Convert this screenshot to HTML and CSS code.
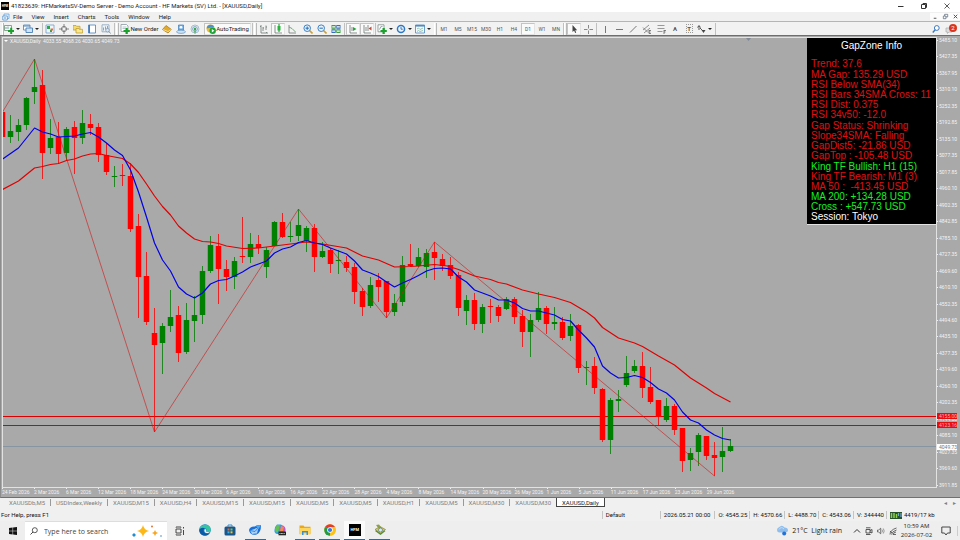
FILE: index.html
```html
<!DOCTYPE html>
<html lang="en">
<head>
<meta charset="utf-8">
<title>XAUUSD,Daily</title>
<link rel="stylesheet" href="styles.css">
</head>
<body>
<header class="titlebar">
  <span class="app-logo">HFM</span>
  <span class="title">41823639: HFMarketsSV-Demo Server - Demo Account - HF Markets (SV) Ltd. - [XAUUSD,Daily]</span>
  <div class="win-controls">
    <button aria-label="Minimize"><svg viewBox="0 0 8 8"><path d="M1 4.500h5.500" stroke="#333"/></svg></button>
    <button aria-label="Restore"><svg viewBox="0 0 8 8"><path d="M1.500 2.500h4v4h-4zM3 2.500v-1h3.500v4h-1" stroke="#333" fill="none"/></svg></button>
    <button aria-label="Close"><svg viewBox="0 0 8 8"><path d="M1.500 1.500l5 5m0-5l-5 5" stroke="#333" stroke-width=".8"/></svg></button>
  </div>
</header>

<nav class="menubar">
  <svg class="menu-icon" viewBox="0 0 8 8"><path d="M2 1h5v4.500H2z" fill="#e8f2fc" stroke="#6aa5dc" stroke-width=".8"/><path d="M.8 3h4.500v4H.8z" fill="#fff" stroke="#4c90d2" stroke-width=".8"/><path d="M2 5h2" stroke="#4c90d2"/></svg>
  <button>File</button><button>View</button><button>Insert</button><button>Charts</button><button>Tools</button><button>Window</button><button>Help</button>
  <div class="mdi-controls">
    <button aria-label="Minimize chart"><svg viewBox="0 0 8 8"><path d="M2 6h3" stroke="#444"/></svg></button>
    <button aria-label="Restore chart"><svg viewBox="0 0 8 8"><path d="M1.500 3.500h3v3h-3zM3 3.500v-2h3.500v3h-2" stroke="#567" fill="none" stroke-width=".8"/></svg></button>
    <button aria-label="Close chart"><svg viewBox="0 0 8 8"><path d="M2 2l4 4m0-4l-4 4" stroke="#444"/></svg></button>
  </div>
</nav>

<div class="toolbar">
  <i class="grip first"></i>
  <button class="tool drop" aria-label="New chart"><svg viewBox="0 0 10 10"><path d="M.5 1.500h7v5h-7z" fill="#f4faf4" stroke="#6a8f74" stroke-width=".8"/><path d="M2 5V3m2 2V2.500" stroke="#579" stroke-width=".7"/><path d="M4 6h2.200V3.800h2V6H10v2H8.200v2h-2V8H4z" fill="#19a12b"/></svg></button>
  <button class="tool drop" aria-label="Profiles"><svg viewBox="0 0 10 10"><path d="M.5 1h6.500v5H.5z" fill="#fff" stroke="#5b8fc2" stroke-width=".9"/><path d="M3 4h6.500v4.500H3z" fill="#cfe3f5" stroke="#4a80b5" stroke-width=".9"/><path d="M.5 2h6.500" stroke="#4a80b5"/></svg></button>
  <i class="edge"></i>
  <button class="tool" aria-label="Market Watch"><svg viewBox="0 0 10 10"><path d="M1 1h8v8H1z" fill="#eef6fd" stroke="#6e9cc5" stroke-width=".8"/><path d="M2 2h3v3H2zM5 6h2v2H5z" fill="#2ba84a"/><path d="M5.500 4.500h2.500v2H5.500z" fill="#e36b3a"/></svg></button>
  <button class="tool" aria-label="Data Window"><svg viewBox="0 0 10 10"><circle cx="5" cy="5" r="2.600" fill="none" stroke="#777" stroke-width=".9"/><path d="M5 0v4M5 6v4M0 5h4M6 5h4" stroke="#777" stroke-width=".9"/></svg></button>
  <button class="tool" aria-label="Navigator"><svg viewBox="0 0 10 10"><path d="M0 1.500h3l.6.8H7V6H0z" fill="#f5dc6a" stroke="#b8962d" stroke-width=".7"/><path d="M3 4.500h2.800l.6.800h3.200V9H3z" fill="#fbe88a" stroke="#b8962d" stroke-width=".7"/></svg></button>
  <button class="tool" aria-label="Terminal"><svg viewBox="0 0 10 10"><path d="M1.500 1h7v8h-7z" fill="#fff" stroke="#5b8cc4" stroke-width=".9"/><path d="M2.300 1v8" stroke="#3f77b5" stroke-width="1.300"/></svg></button>
  <button class="tool" aria-label="Strategy Tester"><svg viewBox="0 0 10 10"><path d="M1 .8h7v7H1z" fill="#eef3f8" stroke="#89a2ba" stroke-width=".8"/><path d="M2.500 6.500v-3m2 2V2.500m2 3.500V2" stroke="#8aa"/><circle cx="6.500" cy="6.200" r="1.800" fill="#dce8f2" stroke="#7894ad" stroke-width=".7"/><path d="M8 7.500l1.500 2" stroke="#7894ad"/></svg></button>
  <i class="sep"></i><i class="grip"></i>
  <button class="tool text new-order"><svg viewBox="0 0 10 10"><path d="M1 .5h5.500L8 2v5.500H1z" fill="#fff" stroke="#8a98a5" stroke-width=".8"/><path d="M2.500 3h4M2.500 4.500h3" stroke="#9ab" stroke-width=".7"/><path d="M3.500 6h2V4h2.300v2h2v2h-2v2H5.500V8h-2z" fill="#19a12b"/></svg>New Order</button>
  <button class="tool" aria-label="MetaEditor"><svg viewBox="0 0 10 10"><path d="M.5 5.500L4 1.500l5.500 4L6 9z" fill="#e2aa2d" stroke="#a87414" stroke-width=".7"/><path d="M1 5.500l5 2 3.500-2" fill="none" stroke="#fff0a8" stroke-width=".7"/></svg></button>
  <button class="tool" aria-label="Community"><svg viewBox="0 0 10 10"><path d="M2.500 1h5v5h-5z" fill="#7cb4e6" stroke="#3c7dba" stroke-width=".7"/><circle cx="5" cy="3.300" r="1.300" fill="#fff"/><ellipse cx="5" cy="7.800" rx="4.500" ry="1.600" fill="#cfe2f3" stroke="#5e93c4" stroke-width=".7"/></svg></button>
  <button class="tool" aria-label="Signals"><svg viewBox="0 0 10 10"><circle cx="5" cy="5" r="4" fill="none" stroke="#9db9cc" stroke-width=".9"/><circle cx="5" cy="5" r="2.400" fill="none" stroke="#6ea0c4" stroke-width=".9"/><circle cx="5" cy="5" r="1.200" fill="#36a44b"/><path d="M5 5v4.500" stroke="#36a44b"/></svg></button>
  <button class="tool text pressed auto"><svg viewBox="0 0 10 10"><circle cx="4.500" cy="4.500" r="4" fill="#e9bd3c"/><path d="M.7 4.500a4 4 0 0 1 7.600-1.500z" fill="#4d92cf"/><circle cx="6.700" cy="6.700" r="3.200" fill="#1da237"/><path d="M5.800 5l2.600 1.700-2.600 1.700z" fill="#fff"/></svg>AutoTrading</button>
  <i class="sep"></i><i class="grip"></i>
  <button class="tool" aria-label="Bar chart"><svg viewBox="0 0 10 10"><path d="M2 1v8h7M1 2.500h1M4 7V3m0 1h1M7 6V1.500m0 1.500h1M8 9l-1-1" stroke="#6d7a74" stroke-width=".8" fill="none"/></svg></button>
  <button class="tool pressed" aria-label="Candlesticks"><svg viewBox="0 0 10 10"><path d="M2 1v8h7" stroke="#6d7a74" stroke-width=".8" fill="none"/><path d="M6 0v8" stroke="#158a25"/><path d="M4.500 2h3v4.500h-3z" fill="#28b53c"/></svg></button>
  <button class="tool" aria-label="Line chart"><svg viewBox="0 0 10 10"><path d="M2 1v8h7" stroke="#6d7a74" stroke-width=".8" fill="none"/><path d="M2 3l3 1.500L8.500 8" stroke="#4d9a5d" stroke-width=".8" fill="none"/></svg></button>
  <i class="gap"></i>
  <button class="tool" aria-label="Zoom in"><svg viewBox="0 0 10 10"><path d="M6.500 6.500L9.500 9.500" stroke="#c9a03a" stroke-width="1.600"/><circle cx="4.200" cy="4.200" r="3.300" fill="#e3f1fc" stroke="#3e82c4"/><path d="M2.500 4.200h3.400M4.200 2.500v3.400" stroke="#2b6cb0"/></svg></button>
  <button class="tool" aria-label="Zoom out"><svg viewBox="0 0 10 10"><path d="M6.500 6.500L9.500 9.500" stroke="#c9a03a" stroke-width="1.600"/><circle cx="4.200" cy="4.200" r="3.300" fill="#e3f1fc" stroke="#3e82c4"/><path d="M2.500 4.200h3.400" stroke="#2b6cb0"/></svg></button>
  <button class="tool" aria-label="Tile windows"><svg viewBox="0 0 10 10"><path d="M.5 1h4.200v3.700H.5zM5.300 5.300h4.200V9H5.300z" fill="#3f9b46"/><path d="M5.300 1h4.200v3.700H5.300zM.5 5.300h4.200V9H.5z" fill="#3570b8"/><path d="M1.200 2.800h2.800M6 2.800h2.800M1.200 7.200h2.800M6 7.200h2.800" stroke="#fff" stroke-width="1.200"/></svg></button>
  <i class="sep"></i>
  <button class="tool pressed" aria-label="Auto scroll"><svg viewBox="0 0 10 10"><path d="M2 1v8h7" stroke="#6d7a74" stroke-width=".8" fill="none"/><path d="M4 7V3" stroke="#6d7a74" stroke-width=".8"/><path d="M5 3l3.500 2L5 7z" fill="#28a53c"/></svg></button>
  <button class="tool pressed" aria-label="Chart shift"><svg viewBox="0 0 10 10"><path d="M2 1v8h7M6 1v6M4 7V3" stroke="#6d7a74" stroke-width=".8" fill="none"/><path d="M9.500 2.500v4L6.500 4.500z" fill="#c34a3a"/></svg></button>
  <i class="sep"></i>
  <button class="tool drop" aria-label="Indicators"><svg viewBox="0 0 10 10"><path d="M1 .8h6v7H1z" fill="#fff" stroke="#7d8d88" stroke-width=".8"/><path d="M2.500 5.500q1-4 3-3" fill="none" stroke="#678" stroke-width=".7"/><path d="M3.500 6h2V4h2.300v2h2v2h-2v2H5.500V8h-2z" fill="#19a12b"/></svg></button>
  <button class="tool drop" aria-label="Periods"><svg viewBox="0 0 10 10"><circle cx="5" cy="5" r="4.300" fill="#2f79c4"/><circle cx="5" cy="5" r="2.800" fill="#e8f3fd"/><path d="M5 3v2.200h1.800" stroke="#245c96" fill="none" stroke-width=".8"/></svg></button>
  <button class="tool drop" aria-label="Templates"><svg viewBox="0 0 10 10"><path d="M.5 1h9v8h-9z" fill="#f4f9fd" stroke="#4b86bd" stroke-width=".8"/><path d="M.5 1.800h9" stroke="#4b86bd" stroke-width="1.500"/><path d="M2 5l1.500-1L5 5.500 8 4M2 7.500l1.500-1L5 7.500l3-1" stroke="#7b9" fill="none" stroke-width=".8"/></svg></button>
  <i class="grip"></i>
  <button class="tool tf">M1</button><button class="tool tf">M5</button><button class="tool tf">M15</button><button class="tool tf">M30</button><button class="tool tf">H1</button><button class="tool tf">H4</button><button class="tool tf pressed">D1</button><button class="tool tf">W1</button><button class="tool tf">MN</button>
  <i class="edge"></i><i class="grip"></i>
  <button class="tool pressed" aria-label="Cursor"><svg viewBox="0 0 10 10"><path d="M3.500 1v7l1.600-1.500L6.200 9l1-.5-1-2.300h2z" fill="#444"/></svg></button>
  <button class="tool" aria-label="Crosshair"><svg viewBox="0 0 10 10"><path d="M5.500 1v3.500M5.500 6.500V10M1 5.500h3.500M6.500 5.500H10" stroke="#888"/></svg></button>
  <i class="sep"></i>
  <button class="tool" aria-label="Vertical line"><svg viewBox="0 0 10 10"><path d="M5.500 2v7" stroke="#777"/></svg></button>
  <button class="tool" aria-label="Horizontal line"><svg viewBox="0 0 10 10"><path d="M2 5.500h7" stroke="#777"/></svg></button>
  <button class="tool" aria-label="Trendline"><svg viewBox="0 0 10 10"><path d="M2 8.500L8.500 2" stroke="#777"/></svg></button>
  <button class="tool" aria-label="Equidistant channel"><svg viewBox="0 0 10 10"><path d="M1 6l6-5M2 9l6-5M1 3.500l5 5" stroke="#666" stroke-width=".7"/><path d="M7 6v3.500M7 6.500h2M7 8h1.500M7 9.500h2" stroke="#555" stroke-width=".7"/></svg></button>
  <button class="tool" aria-label="Fibonacci"><svg viewBox="0 0 10 10"><path d="M1.500 1.500h7M1.500 4.500h7M1.500 7.500h5" stroke="#999"/><path d="M8 6v4M8 6.500h2M8 8h1.500" stroke="#555" stroke-width=".7"/></svg></button>
  <button class="tool letter" aria-label="Text">A</button>
  <button class="tool letter" aria-label="Text label"><span class="boxed">T</span></button>
  <button class="tool drop" aria-label="Arrows"><svg viewBox="0 0 10 10"><path d="M3 6V2M1.500 3.500L3 1.500l1.500 2M4 4l3 3" stroke="#444" fill="none" stroke-width=".9"/><path d="M5.500 6h4l-2 3z" fill="#444"/></svg></button>
  <i class="edge"></i>
  <div class="toolbar-end">
    <button class="tool" aria-label="Search"><svg viewBox="0 0 10 10"><circle cx="5.800" cy="4" r="2.400" fill="#fff" stroke="#3c78bd"/><path d="M4.200 5.800L1.800 8.500" stroke="#3c78bd" stroke-width="1.400"/></svg></button>
    <button class="tool bell" aria-label="Notifications"><svg viewBox="0 0 10 10"><path d="M1 4h6v4H4L2.500 9.500V8H1z" fill="#ddd" stroke="#aaa" stroke-width=".7"/></svg><span class="badge">2</span></button>
  </div>
</div>

<main class="chart">
  <section class="plot">
    <svg class="series" id="series" viewBox="3 38 933 449" preserveAspectRatio="none">
      <path d="M746 38h5l-2.500 3z" fill="#808a94"/>
      <path d="M3 446.500h933" stroke="#8794a2"/>
      <path class="level" d="M3 416.500h933"/>
      <path class="level" d="M3 425.500h933"/>
      <g id="candles"></g>
      <polyline class="zigzag" points="2.500,112 34.500,59 154.500,432 298.500,209 386.500,318 434.500,242 714.500,476"/>
      <polyline class="ma slow" points="2.500,189.500 18.500,181 34.500,168 42.500,166.500 50.500,164.500 58.500,163.500 66.500,160.500 74.500,159 82.500,156 90.500,154 98.500,153.500 106.500,155.500 114.500,157 122.500,158.500 130.500,164 138.500,172.500 146.500,184 154.500,196 162.500,206.500 170.500,215 178.500,226 186.500,233 194.500,239 202.500,241.500 210.500,242 218.500,243.500 226.500,246 242.500,248.500 258.500,248 274.500,246 290.500,244 306.500,242 322.500,244 346.500,248 362.500,256 378.500,260 394.500,267 410.500,266.500 418.500,266 434.500,264.500 447.500,266 458.500,269.500 474.500,276 490.500,279.500 498.500,282.500 506.500,284 522.500,290 538.500,294 554.500,297.500 570.500,302.500 586.500,312 594.500,318 602.500,327.500 618.500,338 634.500,343 642.500,346.500 658.500,356 674.500,365 690.500,378 706.500,388 714.500,393.500 730.500,402"/>
      <polyline class="ma fast" points="2.500,159 18.500,148 34.500,128 42.500,132 50.500,134 58.500,137 66.500,136.500 74.500,136 82.500,134 90.500,132.500 98.500,137 106.500,143 114.500,150 122.500,155.500 130.500,170 138.500,192 146.500,217 154.500,243 162.500,260 170.500,271 178.500,287 186.500,294 194.500,298 202.500,293 210.500,284 218.500,280.500 226.500,279.500 234.500,276 242.500,272 250.500,267 258.500,264 266.500,261 274.500,253 282.500,249 290.500,247 298.500,242.500 306.500,240.500 314.500,243 322.500,244.500 330.500,248 338.500,251 346.500,254 354.500,261 362.500,270 370.500,273 378.500,276.500 386.500,282 394.500,287 402.500,283 410.500,279.500 418.500,275.500 426.500,271 434.500,268.500 442.500,268 450.500,269 458.500,277 466.500,282 474.500,290 482.500,293 490.500,296 498.500,300 506.500,300 514.500,303 522.500,308.500 530.500,311 538.500,311 546.500,313 554.500,315 562.500,319.500 570.500,321 578.500,330 586.500,338 594.500,347 602.500,366 610.500,373 618.500,378 626.500,377.500 634.500,375.500 642.500,377.500 650.500,382.500 658.500,389 666.500,393 674.500,400 682.500,412 690.500,420 698.500,423 706.500,430 714.500,435 722.500,438.500 730.500,440"/>
    </svg>
    <p class="quote">XAUUSD,Daily&nbsp; 4033.55 4068.26 4030.65 4049.73</p>
    <aside class="info">
      <h2>GapZone Info</h2>
      <ul><li>Trend: 37.6</li></ul>
      <ul><li>MA Gap: 135.29 USD</li><li>RSI Below SMA(34)</li><li>RSI Bars 34SMA Cross: 11</li><li>RSI Dist: 0.375</li><li>RSI 34v50: -12.0</li></ul>
      <ul><li>Gap Status: Shrinking</li><li>Slope34SMA: Falling</li><li>GapDist5: -21.86 USD</li><li>GapTop : -105.48 USD</li></ul>
      <ul><li class="up">King TF Bullish: H1 (15)</li><li>King TF Bearish: M1 (3)</li><li>MA 50 :&nbsp; -413.45 USD</li><li class="up">MA 200: +134.28 USD</li><li class="up">Cross : +547.73 USD</li><li class="plain">Session: Tokyo</li></ul>
    </aside>
  </section>
  <div class="prices">
    <span>5485.10</span><span>5427.35</span><span>5367.95</span><span>5310.10</span><span>5252.35</span><span>5192.85</span><span>5135.10</span><span>5077.35</span><span>5017.85</span><span>4960.10</span><span>4902.35</span><span>4842.85</span><span>4785.10</span><span>4727.35</span><span>4669.60</span><span>4610.10</span><span>4552.35</span><span>4494.60</span><span>4435.10</span><span>4377.35</span><span>4319.60</span><span>4260.10</span><span>4202.35</span><span>4144.60</span><span>4085.10</span><span>4027.35</span><span>3969.60</span><span>3911.85</span>
    <b class="tag upper">4155.00</b><b class="tag lower">4123.16</b><b class="tag last">4049.73</b>
  </div>
  <div class="dates">
    <span>24 Feb 2026</span><span>2 Mar 2026</span><span>6 Mar 2026</span><span>12 Mar 2026</span><span>18 Mar 2026</span><span>24 Mar 2026</span><span>30 Mar 2026</span><span>6 Apr 2026</span><span>10 Apr 2026</span><span>16 Apr 2026</span><span>22 Apr 2026</span><span>28 Apr 2026</span><span>4 May 2026</span><span>8 May 2026</span><span>14 May 2026</span><span>20 May 2026</span><span>26 May 2026</span><span>1 Jun 2026</span><span>5 Jun 2026</span><span>11 Jun 2026</span><span>17 Jun 2026</span><span>23 Jun 2026</span><span>29 Jun 2026</span>
  </div>
</main>

<nav class="tabs">
  <button>XAUUSDb,M5</button><button>USDIndex,Weekly</button><button>XAUUSD,M15</button><button>XAUUSD,H4</button><button>XAUUSD,M15</button><button>XAUUSD,M15</button><button>XAUUSD,M5</button><button>XAUUSD,M5</button><button>XAUUSD,H1</button><button>XAUUSD,M5</button><button>XAUUSD,M30</button><button>XAUUSD,M30</button><button class="active">XAUUSD,Daily</button>
  <span class="tab-arrows"><span>◂</span><span>▸</span></span>
</nav>

<footer class="status">
  <span class="help">For Help, press F1</span>
  <span class="profile">Default</span>
  <span class="stamp">2026.05.21 00:00</span><span>O: 4545.25</span><span>H: 4570.66</span><span>L: 4488.70</span><span>C: 4543.06</span><span>V: 344440</span>
  <span class="traffic"><svg viewBox="0 0 12 7"><path d="M0 0h12v7H0z" fill="#27512a"/><path d="M1.500 1v5M4 1v5M6.500 2v4" stroke="#8fd04e" stroke-width="1.500"/><path d="M8.500 1v3M11 1v4" stroke="#6fa8dc" stroke-width="1.200"/></svg>4419/17 kb</span>
</footer>

<div class="taskbar">
  <button class="start" aria-label="Start"><svg viewBox="0 0 8 8"><path d="M0 1l3.600-.5v3.300H0zM4.100.4L8 0v3.800H4.100zM0 4.300h3.600v3.300L0 7zM4.100 4.300H8V8l-3.900-.4z" fill="#111"/></svg></button>
  <label class="search">
    <svg class="glass" viewBox="0 0 8 8"><circle cx="4.800" cy="3.200" r="2.500" fill="none" stroke="#333" stroke-width=".8"/><path d="M3 5L.5 7.500" stroke="#333" stroke-width=".9"/></svg>
    <input type="text" placeholder="Type here to search" aria-label="Type here to search">
    <svg class="sparkle" viewBox="0 0 32 14"><path d="M12 1q1 5 6 6-5 1-6 6-1-5-6-6 5-1 6-6z" fill="#fbb817"/><path d="M24 6q.5 2.500 3 3-2.500.5-3 3-.5-2.500-3-3 2.500-.5 3-3z" fill="#f6a623"/><path d="M3 9l2 2-2 2-2-2z" fill="#1e8fd5"/><circle cx="21" cy="2.500" r="1" fill="#d9763a"/><circle cx="30" cy="12" r="1" fill="#8fb8dd"/></svg>
  </label>
  <button class="view" aria-label="Task view"><svg viewBox="0 0 10 10"><path d="M1 3h5v4H1zM1 1.500V1h5v.5M1 8.500V9h5v-.5M8.500 1v1.500M8.500 4v5" fill="none" stroke="#333" stroke-width=".9"/></svg></button>
  <div class="apps">
    <button aria-label="Edge"><svg viewBox="0 0 12 12"><circle cx="6" cy="6" r="5.800" fill="#1779c8"/><path d="M.3 6A5.800 5.800 0 0 1 11.800 5.500c.2 2.500-3 3.300-4.500 2.200.8-1 .5-3-1.300-3.500C3.500 3.400 1 4.500.3 6z" fill="#35c6a0"/><path d="M.3 6c.7-2 3.700-3 5.400-1.800-2 .8-2 4.800 1.800 5.600 1.500.3 3-.3 3.500-.8-3 4-10.500 3.500-10.700-3z" fill="#0c59a4"/><path d="M5.700 5.200c.9-.5 2 .8 1.400 2.200 1 1 3 .9 4.200-.2-.8 2-4.700 2.800-5.800.3-.3-1-.2-1.800.2-2.300z" fill="#f0f0f0"/></svg></button>
    <button aria-label="Store"><svg viewBox="0 0 12 12"><path d="M4 2.500V1h4v1.500" fill="none" stroke="#2c8fd6"/><rect x=".5" y="2.500" width="11" height="9" rx="1.500" fill="#17558c"/><path d="M3.500 4.500h2v2h-2z" fill="#f2632f"/><path d="M6.500 4.500h2v2h-2z" fill="#8ac43f"/><path d="M3.500 7.300h2v2h-2z" fill="#2fb4f2"/><path d="M6.500 7.300h2v2h-2z" fill="#fdc12d"/></svg></button>
    <button class="open" aria-label="Mail"><svg viewBox="0 0 12 12"><path d="M0 6Q1 2 6 2.500q1-2 6-1.500 0 8-4.500 9.500Q1 12 0 6z" fill="#1b6ed6"/><path d="M1 6.500l8.500-3L8 9.500l-5 .5z" fill="#a9d2fb"/><path d="M1 6.500L6 7.500l3.500-4" stroke="#2f87e6" fill="none"/><path d="M7 2q3-1.500 5-1L9.500 5z" fill="#4aa8f5"/></svg></button>
    <button aria-label="Copilot"><svg viewBox="0 0 12 12"><path d="M3 .5h4Q9 1 9 4L5 10H3Q0 9 .5 6 1 2 3 .5z" fill="#2aa6dd"/><path d="M1 5l2-4h3L4 8H2z" fill="#67c14c"/><path d="M7 1.500h2q3 1.500 2.500 5-.5 3-3 4H5z" fill="#c256c4"/><path d="M7 2l3 1-1 4H6z" fill="#f08a4b"/><path d="M4.500 7.500H12v3.800H4.500z" fill="#222"/><path d="M5.500 9.500h5.500" stroke="#ddd" stroke-width=".9" stroke-dasharray="1 .4"/></svg></button>
    <button class="open" aria-label="File Explorer"><svg viewBox="0 0 12 12"><path d="M.5 1.500h4l1 1.200h6V10H.5z" fill="#e9a820"/><path d="M.5 4h11v6.500H.5z" fill="#fdd65b"/><path d="M3 11V7h6v4H7.500V8.500h-3V11z" fill="#3a8fd8"/></svg></button>
    <button class="open" aria-label="Chrome"><svg viewBox="0 0 12 12"><circle cx="6" cy="6" r="5.800" fill="#fbc116"/><path d="M6 6L1 3.100A5.800 5.800 0 0 1 11 3.100H6z" fill="#e33b2e"/><path d="M6 6v5.800A5.800 5.800 0 0 1 1 3.100z" fill="#229a48"/><path d="M6 6l2.500 1.500L6 11.800A5.800 5.800 0 0 0 11 3.100H6z" fill="#fbc116"/><circle cx="6" cy="6" r="2.800" fill="#fff"/><circle cx="6" cy="6" r="2.100" fill="#3578e5"/></svg></button>
    <button class="open current" aria-label="HF Markets"><span class="hfm">HFM</span></button>
    <button class="open" aria-label="MetaEditor"><svg viewBox="0 0 12 12"><path d="M1 7l5-3 5.500 3-5 4z" fill="#4b8f3c"/><path d="M1 5.500l5-3 5.500 3-5 4z" fill="#e8c34a" stroke="#6f7d35" stroke-width=".6"/><path d="M2 1l3-.5 3 4-2 2z" fill="#8aa04a"/><circle cx="6.500" cy="6" r="2" fill="#d4ebf7" stroke="#4a7fa0" stroke-width=".7"/></svg></button>
  </div>
  <div class="tray">
    <button class="weather"><svg viewBox="0 0 12 11"><path d="M3 7.500a2.700 2.700 0 0 1 0-5.200Q6-1 8.500 2.500q3.500 0 3.500 3-.3 2-2.500 2z" fill="#8fbdec"/><path d="M3 4.500Q5 1 8 4" stroke="#c7def6" fill="none"/><circle cx="8.200" cy="8.500" r="2" fill="#1f72d8"/></svg><span>21°C&nbsp; Light rain</span></button>
    <button aria-label="Show hidden icons"><svg class="t8" viewBox="0 0 8 8"><path d="M1 5.500l3-3 3 3" fill="none" stroke="#333"/></svg></button>
    <button aria-label="Meet now"><svg class="t8" viewBox="0 0 8 8"><path d="M1 2.500h4v3.500H1zM5 3.500l2-1v3.500l-2-1M1 .8h4.500M1 7.500h4.500" fill="none" stroke="#333" stroke-width=".8"/></svg></button>
    <button aria-label="Volume"><svg class="t8" viewBox="0 0 8 8"><path d="M.5 3h1.200l2-1.800v5.600l-2-1.800H.5z" fill="none" stroke="#444" stroke-width=".7"/><path d="M5 2.500q1 1.500 0 3M6.300 1.500q1.800 2.500 0 5" fill="none" stroke="#777" stroke-width=".7"/></svg></button>
    <button aria-label="Pen"><svg class="t8" viewBox="0 0 8 8"><path d="M1 7.500Q1 3 7.500 1M2.500 7.500Q3 4.500 7.500 3M4 7.500q.5-2 3-2.500M1 4l2 2M4 7.500h3" fill="none" stroke="#444" stroke-width=".8"/></svg></button>
    <div class="clock"><span>10:59 AM</span><span>2026-07-02</span></div>
    <button class="notes" aria-label="Action center"><svg viewBox="0 0 10 10"><path d="M.8 1h8.400v6H6.500L5 9 3.500 7H.8z" fill="none" stroke="#333" stroke-width=".9"/></svg></button>
  </div>
</div>
<script src="chart.js"></script>
</body>
</html>
```
FILE: styles.css
```css
* { box-sizing: border-box; }
html, body { margin: 0; }
body {
  display: flex;
  flex-direction: column;
  min-height: 100vh;
  background: #f0f0f0;
  color: #222;
  font: 6px/8px Roboto, "Liberation Sans", sans-serif;
  overflow: hidden;
}
button {
  display: inline-flex;
  align-items: center;
  justify-content: center;
  margin: 0;
  padding: 0;
  border: 0;
  background: none;
  color: inherit;
  font: inherit;
  white-space: nowrap;
}
svg { display: block; flex: none; }
ul, p, h2 { margin: 0; padding: 0; }

.titlebar { display: flex; align-items: center; height: 12px; padding: 0 2px 0 1px; background: #fff; }
.app-logo {
  width: 8px; margin-right: 2px;
  background: #000; color: #fff;
  font-size: 3px; font-weight: bold; line-height: 8px; text-align: center;
}
.win-controls { display: flex; margin-left: auto; }
.win-controls button { width: 23px; }
.win-controls svg { width: 8px; height: 8px; }

.menubar { display: flex; align-items: center; gap: 9px; height: 9px; padding-left: 2px; background: #f0f0f0; }
.menu-icon { width: 8px; height: 8px; margin-right: -6px; }
.mdi-controls { display: flex; margin-left: auto; background: #fcfcfc; }
.mdi-controls button { width: 10px; }
.mdi-controls svg { width: 7px; height: 7px; }

.toolbar {
  display: flex; align-items: center;
  height: 15px; padding-left: 2px;
  border-top: 1px solid #b5b5b5;
  border-bottom: 1px solid #6e6e6e;
  background: #f2f2f2;
}
.tool { width: 14px; height: 12px; flex: none; }
.tool svg { width: 10px; height: 10px; }
.drop { width: 19px; justify-content: flex-start; gap: 2px; }
.drop::after {
  content: "";
  border: 2px solid transparent;
  border-top-color: #222;
  border-bottom: 0;
}
.pressed { border: 1px solid #c4c4c4; border-right-color: #e4e4e4; border-bottom-color: #e4e4e4; background: #fafafa; }
.text { width: auto; }
.new-order { width: 41px; }
.auto { width: 47px; margin-left: 2px; }
.tf { color: #555; font-size: 5px; }
.letter { color: #555; font-weight: bold; }
.boxed { width: 7px; border: 1px dotted #999; line-height: 7px; }
.grip, .sep, .edge, .gap { flex: none; height: 12px; }
.grip { width: 3px; border-left: 1px solid #fff; border-right: 1px solid #b8b8b8; }
.first, .gap { width: 2px; }
.sep { width: 3px; background: linear-gradient(#c0c0c0, #c0c0c0) center / 1px 100% no-repeat; }
.edge { width: 1px; background: #c0c0c0; }
.toolbar-end { display: flex; margin-left: auto; padding-right: 3px; }
.bell { position: relative; }
.badge {
  position: absolute; top: 1px; right: 0;
  width: 8px; height: 8px; border-radius: 4px;
  background: #d9341f; color: #fff;
  font-size: 6px; line-height: 8px;
}

.chart {
  display: grid;
  grid-template: minmax(0, 1fr) 9px / minmax(0, 1fr) 22px;
  flex: 1;
  padding: 1px 1px 0 1px;
  border-left: 1px solid #8d8d8d;
  border-bottom: 1px solid #707070;
  background: #a9a9a9;
  color: #f4f4f4;
  font: 5px/6px Roboto, "Liberation Sans", sans-serif;
}
.plot { position: relative; border: 1px solid #e2e2e2; }
.series { width: 100%; height: 100%; position: absolute; inset: 0; }
.level { stroke: #d80000; stroke-width: 1; shape-rendering: crispEdges; }
.zigzag { fill: none; stroke: #d01414; stroke-width: .6; }
.ma { fill: none; stroke-width: 1.2; stroke-linejoin: round; }
.slow { stroke: #e00000; }
.fast { stroke: #0000e6; }
.bull { stroke: #008000; }
.bear { stroke: #ff0000; }
.wick { stroke-width: .8; }
.body { stroke-width: 5.5; }
.quote { position: relative; display: flex; align-items: center; gap: 2px; padding-left: 1px; white-space: nowrap; }
.quote::before { content: ""; border: 2px solid transparent; border-top-color: #fff; border-bottom: 0; }
.info {
  position: absolute; top: 0; right: 0;
  width: 129px; padding: 3px 0 1px 4px;
  border-bottom: 1px solid #e2e2e2;
  background: #000; color: #e01010;
  font: 10px/10px "Liberation Sans", Arial, sans-serif;
  white-space: nowrap;
}
.info h2 { margin-bottom: 8px; padding-right: 4px; color: #fff; font: inherit; text-align: center; }
.info ul { list-style: none; margin-bottom: 1px; }
.info .up { color: #14f024; }
.info .plain { color: #fff; }

.prices { position: relative; display: flex; flex-direction: column; justify-content: space-between; padding-left: 2px; }
.prices span { position: relative; }
.prices span::before { content: ""; position: absolute; left: -2px; top: 3px; width: 1px; height: 1px; background: #eee; }
.tag { position: absolute; left: 0; width: 20px; padding-left: 2px; background: #e80c0c; color: #ffb0b0; font-weight: normal; transform: translateY(-50%); }
.upper { top: 84.1%; }
.lower { top: 86.1%; }
.last { top: 90.8%; background: #fff; color: #777; }
.dates { display: grid; grid-template-columns: repeat(23, minmax(0, 32fr)) minmax(0, 198fr); align-items: start; white-space: nowrap; }
.dates span { background: linear-gradient(#eee, #eee) top left / 1px 1px no-repeat; line-height: 8px; }

.tabs { display: flex; align-items: center; height: 11px; padding: 0 0 2px 4px; background: #f0f0f0; color: #808080; }
.tabs button { padding: 0 5px; border-right: 1px solid #999; line-height: 7px; }
.tabs button:nth-last-child(3) { border-right: 0; }
.tabs .active { align-self: stretch; border: 1px solid #444; border-top: 0; background: #fff; color: #222; }
.tab-arrows { display: flex; gap: 6px; margin-left: auto; padding-right: 4px; }

.status { display: flex; align-items: center; height: 12px; color: #111; }
.status span { padding: 0 2px 0 3px; border-left: 1px solid #c4c4c4; white-space: nowrap; }
.status .help { flex: 1; padding-left: 1px; border-left: 0; }
.status .profile { width: 58px; }
.status .stamp { padding-right: 4px; }
.status .traffic { display: flex; align-items: center; gap: 2px; width: 74px; }
.traffic svg { width: 12px; height: 7px; }

.taskbar { display: flex; align-items: stretch; height: 19px; background: #eee; font: 7px/9px "Open Sans", "Noto Sans", sans-serif; }
.start { width: 25px; }
.start svg { width: 8px; height: 8px; }
.search { display: flex; align-items: center; gap: 6px; width: 142px; padding: 0 4px 0 5px; border-top: 1px solid #ddd; background: #fff; }
.glass { width: 8px; height: 8px; }
.search input { flex: 1; min-width: 0; margin: 0; padding: 0; border: 0; outline: 0; background: none; font: inherit; color: #333; }
.search input::placeholder { color: #444; opacity: 1; }
.sparkle { width: 32px; height: 14px; }
.view { width: 26px; }
.view svg { width: 10px; height: 10px; }
.apps { display: flex; gap: 4px; width: 197px; padding-left: 2px; }
.apps button { flex: 1; border-bottom: 1px solid transparent; }
.apps svg { width: 12px; height: 12px; }
.apps .open { border-bottom-color: #1a6fb8; }
.apps .current { background: #fafafa; }
.hfm { width: 12px; background: #000; color: #fff; font: bold 4px/12px Roboto, sans-serif; }
.tray { display: flex; align-items: center; margin-left: auto; padding-right: 2px; }
.tray > button { width: 12px; }
.t8 { width: 8px; height: 8px; }
.tray .weather { width: auto; gap: 4px; margin-right: 9px; }
.weather svg { width: 12px; height: 11px; }
.clock { display: flex; flex-direction: column; width: 35px; font-size: 6px; text-align: center; }
.tray .notes { width: 24px; border-right: 1px solid #ccc; }
.notes svg { width: 10px; height: 10px; }
```
FILE: chart.js
```js
// One row per candle: direction, high, low, body top, body bottom.
const candles = [
  "r 107 152 112 137", "g 115 143 131 137", "g 119 141 125 132", "g 97 130 98 125",
  "g 59 104 87 92", "r 70 179 85 153", "g 119 154 138 148", "r 122 164 137 154",
  "g 127 160 129 153", "r 121 174 127 138", "g 110 144 123 138", "r 114 135 124 128",
  "r 123 162 127 155", "r 143 175 155 172", "g 166 187 176 177", "r 164 186 175 176",
  "r 163 232 176 229", "r 214 318 226 277", "r 252 325 276 322", "r 308 432 333 345",
  "g 323 374 326 343", "g 290 332 317 326", "r 306 362 315 353", "g 303 354 320 352",
  "g 296 342 315 321", "g 266 324 271 315", "g 236 273 245 271", "r 234 304 246 269",
  "r 260 291 269 277", "g 257 289 261 277", "r 217 263 256 257", "g 233 263 244 257",
  "r 235 254 244 248", "g 247 278 250 267", "g 221 246 222 246", "r 213 238 222 237",
  "g 222 242 236 237", "g 209 241 225 236", "g 226 252 228 241", "r 224 272 228 257",
  "g 242 258 251 257", "r 248 273 250 264", "g 250 274 260 261", "r 256 272 262 268",
  "r 263 304 267 292", "r 288 316 291 307", "g 277 308 285 306", "r 273 302 280 287",
  "r 281 318 281 312", "g 294 316 303 312", "g 256 306 265 302", "r 244 267 264 266",
  "g 248 267 257 266", "g 249 278 253 267", "r 242 280 252 258", "r 254 271 259 266",
  "r 257 279 265 276", "r 272 316 275 308", "g 295 325 300 311", "r 293 330 300 324",
  "g 304 333 307 324", "r 299 323 306 307", "r 305 322 307 316", "g 297 310 299 309",
  "r 297 324 299 317", "r 310 347 316 332", "g 314 357 320 332", "g 292 322 308 320",
  "r 306 334 308 324", "g 307 330 322 324", "r 317 340 322 338", "g 314 341 326 336",
  "r 324 373 325 368", "g 361 385 367 368", "r 357 394 366 388", "r 388 442 389 440",
  "g 398 454 400 440", "g 390 412 399 401", "g 356 387 373 385", "g 360 373 366 371",
  "r 352 398 366 388", "r 367 404 387 402", "r 400 425 400 417", "g 398 422 406 420",
  "r 404 435 406 430", "r 428 472 428 461", "g 448 471 453 460", "g 433 466 435 452",
  "r 436 460 436 456", "r 442 476 455 458", "g 427 472 451 457", "g 439 452 446 451"
];
const firstX = 2.5;
const step = 8;
const layer = document.getElementById("candles");

function addPath(className, d) {
  const path = document.createElementNS("http://www.w3.org/2000/svg", "path");
  path.setAttribute("class", className);
  path.setAttribute("d", d);
  layer.appendChild(path);
}

candles.forEach((row, i) => {
  const [direction, high, low, top, bottom] = row.split(" ");
  const x = firstX + i * step;
  const tone = direction === "g" ? "bull" : "bear";
  addPath(`wick ${tone}`, `M${x} ${high}V${low}`);
  addPath(`body ${tone}`, `M${x} ${top}V${bottom}`);
});
```
